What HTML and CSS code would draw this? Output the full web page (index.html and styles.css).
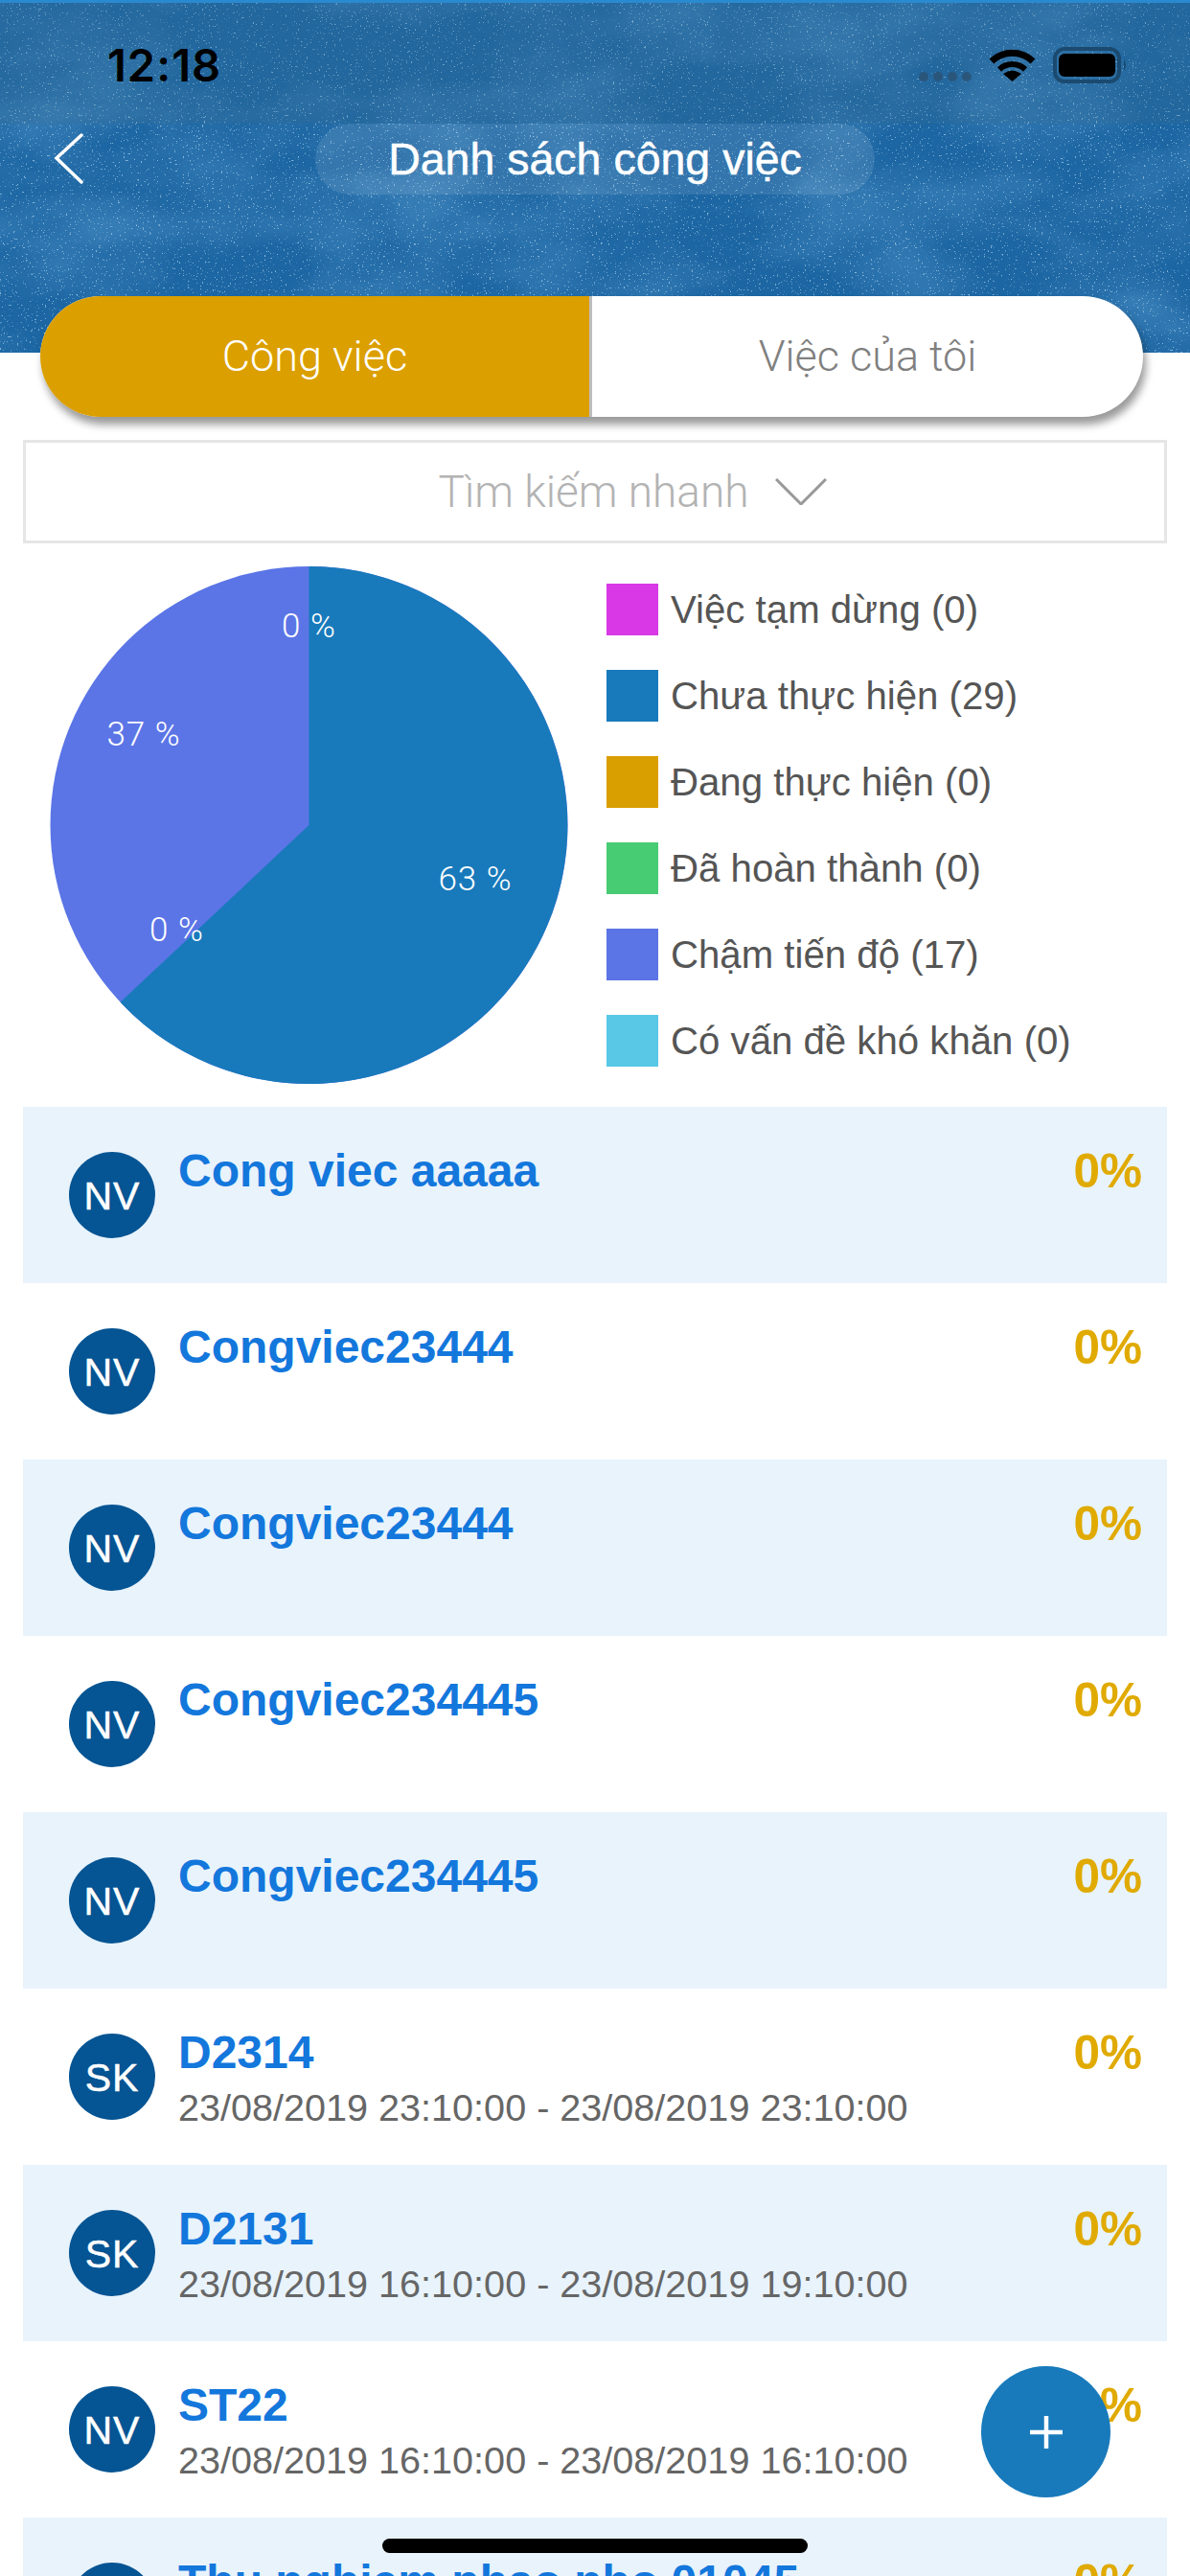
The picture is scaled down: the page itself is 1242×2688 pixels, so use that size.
FILE: index.html
```html
<!DOCTYPE html>
<html lang="vi">

<head>
  <meta charset="UTF-8">
  <meta name="viewport" content="width=device-width, initial-scale=1.0">
  <title>Danh sách công việc</title>
  <link rel="stylesheet" href="styles.css">
</head>

<body>
  <div class="screen">
    <header class="header">
      <!-- nen bau troi sao -->
      <svg class="header-bg" width="1242" height="368" viewBox="0 0 1242 368">
        <defs>
          <filter id="clouds" x="0" y="0" width="100%" height="100%">
            <feTurbulence type="fractalNoise" baseFrequency="0.006 0.011" numOctaves="4" seed="23" />
            <feColorMatrix type="matrix" values="0 0 0 0 0.18  0 0 0 0 0.45  0 0 0 0 0.76  2.6 0 0 0 -1.05" />
          </filter>
          <filter id="stars" x="0" y="0" width="100%" height="100%">
            <feTurbulence type="fractalNoise" baseFrequency="0.55" numOctaves="2" seed="5" />
            <feColorMatrix type="matrix" values="0 0 0 0 0.58  0 0 0 0 0.80  0 0 0 0 0.94  0 10 0 0 -6.7" />
          </filter>
        </defs>
        <rect width="1242" height="368" filter="url(#clouds)" opacity="0.28" />
        <rect width="1242" height="368" filter="url(#stars)" opacity="0.6" />
        <rect width="1242" height="129" fill="#3c6f8f" opacity="0.22" />
        <rect width="1242" height="3" fill="#2a8ad0" />
      </svg>

      <div class="status-bar">
        <span class="time">12:18</span>
        <div class="status-icons">
          <div class="signal"><i></i><i></i><i></i><i></i></div>
          <svg width="49" height="36" viewBox="0 0 49 36">
            <path d="M3 15 A31 31 0 0 1 46 15" fill="none" stroke="#000" stroke-width="7" />
            <path d="M11 23.5 A19.5 19.5 0 0 1 38 23.5" fill="none" stroke="#000" stroke-width="6" />
            <path d="M24.5 36 L15 28 Q24.5 21 34 28 Z" fill="#000" />
          </svg>
          <svg width="78" height="38" viewBox="0 0 78 38">
            <rect x="2" y="2" width="67" height="34" rx="10" fill="none" stroke="#1b4a70" stroke-width="4" />
            <rect x="6" y="7" width="59" height="24" rx="6" fill="#000" />
            <path d="M74 13 Q78 19 74 25 Z" fill="#1b4a70" />
          </svg>
        </div>
      </div>

      <div class="nav-bar">
        <svg class="back" width="32" height="54" viewBox="0 0 32 54">
          <path d="M29 2 L3 26 L29 51" fill="none" stroke="#fff" stroke-width="3.5" stroke-linecap="round" />
        </svg>
        <div class="nav-title">Danh sách công việc</div>
      </div>
    </header>

    <div class="tabs">
      <div class="tab tab-active">Công việc</div>
      <div class="tab">Việc của tôi</div>
    </div>

    <div class="search">
      <span>Tìm kiếm nhanh</span>
      <svg width="54" height="28" viewBox="0 0 54 28">
        <path d="M1 1 L27 27 L53 1" fill="none" stroke="#999" stroke-width="3" />
      </svg>
    </div>

    <section class="chart">
      <svg class="pie" width="541" height="541" viewBox="0 0 541 541">
        <circle cx="270.5" cy="270" r="270" fill="#5b75e6" />
        <path d="M270.5 270 L270.5 0 A270 270 0 1 1 73.5 454.8 Z" fill="#187abb" />
        <text x="270.5" y="74" text-anchor="middle">0 %</text>
        <text x="98" y="187" text-anchor="middle">37 %</text>
        <text x="444" y="338" text-anchor="middle">63 %</text>
        <text x="132.5" y="391" text-anchor="middle">0 %</text>
      </svg>
      <ul class="legend">
        <li><i class="sw sw-paused"></i>Việc tạm dừng (0)</li>
        <li><i class="sw sw-todo"></i>Chưa thực hiện (29)</li>
        <li><i class="sw sw-doing"></i>Đang thực hiện (0)</li>
        <li><i class="sw sw-done"></i>Đã hoàn thành (0)</li>
        <li><i class="sw sw-late"></i>Chậm tiến độ (17)</li>
        <li><i class="sw sw-issue"></i>Có vấn đề khó khăn (0)</li>
      </ul>
    </section>

    <div class="list">
      <div class="row">
        <div class="avatar">NV</div>
        <div class="row-text"><div class="row-title">Cong viec aaaaa</div></div>
        <div class="pct">0%</div>
      </div>
      <div class="row">
        <div class="avatar">NV</div>
        <div class="row-text"><div class="row-title">Congviec23444</div></div>
        <div class="pct">0%</div>
      </div>
      <div class="row">
        <div class="avatar">NV</div>
        <div class="row-text"><div class="row-title">Congviec23444</div></div>
        <div class="pct">0%</div>
      </div>
      <div class="row">
        <div class="avatar">NV</div>
        <div class="row-text"><div class="row-title">Congviec234445</div></div>
        <div class="pct">0%</div>
      </div>
      <div class="row">
        <div class="avatar">NV</div>
        <div class="row-text"><div class="row-title">Congviec234445</div></div>
        <div class="pct">0%</div>
      </div>
      <div class="row">
        <div class="avatar">SK</div>
        <div class="row-text">
          <div class="row-title">D2314</div>
          <div class="row-date">23/08/2019 23:10:00 - 23/08/2019 23:10:00</div>
        </div>
        <div class="pct">0%</div>
      </div>
      <div class="row">
        <div class="avatar">SK</div>
        <div class="row-text">
          <div class="row-title">D2131</div>
          <div class="row-date">23/08/2019 16:10:00 - 23/08/2019 19:10:00</div>
        </div>
        <div class="pct">0%</div>
      </div>
      <div class="row">
        <div class="avatar">NV</div>
        <div class="row-text">
          <div class="row-title">ST22</div>
          <div class="row-date">23/08/2019 16:10:00 - 23/08/2019 16:10:00</div>
        </div>
        <div class="pct">0%</div>
      </div>
      <div class="row">
        <div class="avatar">NV</div>
        <div class="row-text"><div class="row-title">Thu nghiem phao nho 01045</div></div>
        <div class="pct">0%</div>
      </div>
    </div>

    <div class="fab">
      <svg width="36" height="36" viewBox="0 0 36 36">
        <path d="M18 1 V35 M1 18 H35" stroke="#fff" stroke-width="4.5" />
      </svg>
    </div>
    <div class="home-indicator"></div>
  </div>
</body>

</html>
```

FILE: styles.css
```css
* {
  box-sizing: border-box;
}

body {
  margin: 0;
  background: #fff;
  font-family: "Liberation Sans", Arial, sans-serif;
}

.screen {
  position: relative;
  width: 1242px;
  height: 2688px;
  overflow: hidden;
}

/* header */
.header {
  position: relative;
  height: 368px;
  background: #1c66a3;
}

.header-bg {
  position: absolute;
  top: 0;
  left: 0;
}

.status-bar {
  position: relative;
  height: 129px;
  padding: 49px 65px 0 112px;
  display: flex;
  justify-content: space-between;
  align-items: flex-start;
}

.time {
  font-family: Inter, "Liberation Sans", sans-serif;
  font-size: 47px;
  font-weight: 600;
  letter-spacing: 1px;
  line-height: 38px;
  color: #000;
}

.status-icons {
  display: flex;
  align-items: flex-start;
  gap: 18px;
}

.signal {
  display: flex;
  gap: 5px;
  margin-top: 26px;
}

.signal i {
  width: 10px;
  height: 10px;
  border-radius: 50%;
  background: #2b567c;
}

.nav-bar {
  position: relative;
  display: flex;
  justify-content: center;
}

.back {
  position: absolute;
  left: 56px;
  top: 10px;
}

.nav-title {
  width: 584px;
  height: 74px;
  border-radius: 37px;
  background: rgba(255, 255, 255, 0.1);
  color: #fff;
  font-size: 46.5px;
  -webkit-text-stroke: 0.5px #fff;
  line-height: 74px;
  text-align: center;
}

/* tabs */
.tabs {
  position: relative;
  display: flex;
  width: 1151px;
  height: 126px;
  margin: -59px 0 0 42px;
  border-radius: 63px;
  background: #fff;
  box-shadow: 3px 8px 9px rgba(0, 0, 0, 0.4);
  overflow: hidden;
}

.tab {
  flex: 1;
  font-family: Roboto, "Liberation Sans", sans-serif;
  font-size: 45px;
  font-weight: 300;
  line-height: 126px;
  text-align: center;
  color: #808080;
  border-left: 3px solid #bdbdbd;
}

.tab-active {
  flex: none;
  width: 573px;
  background: #db9f00;
  color: #fff;
  border-left: 0;
}

/* search */
.search {
  display: flex;
  align-items: center;
  justify-content: center;
  gap: 27px;
  height: 108px;
  margin: 24px 24px 0;
  padding-left: 78px;
  border: 3px solid #e6e6e6;
  font-family: Roboto, "Liberation Sans", sans-serif;
  font-size: 46px;
  font-weight: 300;
  color: #b3b3b3;
}

/* chart */
.chart {
  display: flex;
  height: 588px;
  padding: 24px 0 0 52px;
}

.pie {
  flex: none;
}

.pie text {
  font-family: Roboto, "Liberation Sans", sans-serif;
  font-size: 35px;
  font-weight: 300;
  letter-spacing: 1px;
  fill: #fff;
}

.legend {
  list-style: none;
  margin: 18px 0 0 40px;
  padding: 0;
  font-size: 40.2px;
  color: #555;
}

.legend li {
  display: flex;
  align-items: center;
  gap: 13px;
  height: 54px;
  padding-top: 2px;
  margin-bottom: 36px;
}

.sw {
  width: 54px;
  height: 54px;
  margin-top: -2px;
}

.sw-paused { background: #d838e6; }
.sw-todo { background: #187abb; }
.sw-doing { background: #d99e00; }
.sw-done { background: #47cc73; }
.sw-late { background: #5b75e6; }
.sw-issue { background: #58c8e6; }

/* list */
.list {
  margin: 0 24px;
}

.row {
  display: flex;
  height: 184px;
  padding: 47px 26px 0 48px;
  background: #fff;
}

.row:nth-child(odd) {
  background: #e8f3fc;
}

.avatar {
  flex: none;
  width: 90px;
  height: 90px;
  border-radius: 50%;
  background: #055493;
  color: #fff;
  font-size: 41px;
  -webkit-text-stroke: 0.5px #fff;
  letter-spacing: 1px;
  line-height: 92px;
  text-align: center;
}

.row-text {
  flex: 1;
  margin-left: 24px;
  margin-top: -8px;
}

.row-title {
  font-size: 48px;
  font-weight: 700;
  line-height: 56px;
  color: #1377dc;
}

.row-date {
  margin-top: 5px;
  font-size: 39.6px;
  line-height: 48px;
  color: #666;
}

.pct {
  margin-top: -8px;
  font-size: 49.5px;
  font-weight: 700;
  line-height: 56px;
  color: #e0aa00;
}

/* floating */
.fab {
  position: absolute;
  left: 1024px;
  top: 2469px;
  width: 135px;
  height: 137px;
  border-radius: 50%;
  background: #187abb;
  display: flex;
  align-items: center;
  justify-content: center;
}

.home-indicator {
  position: absolute;
  left: 399px;
  top: 2649px;
  width: 444px;
  height: 15px;
  border-radius: 8px;
  background: #000;
}
```
